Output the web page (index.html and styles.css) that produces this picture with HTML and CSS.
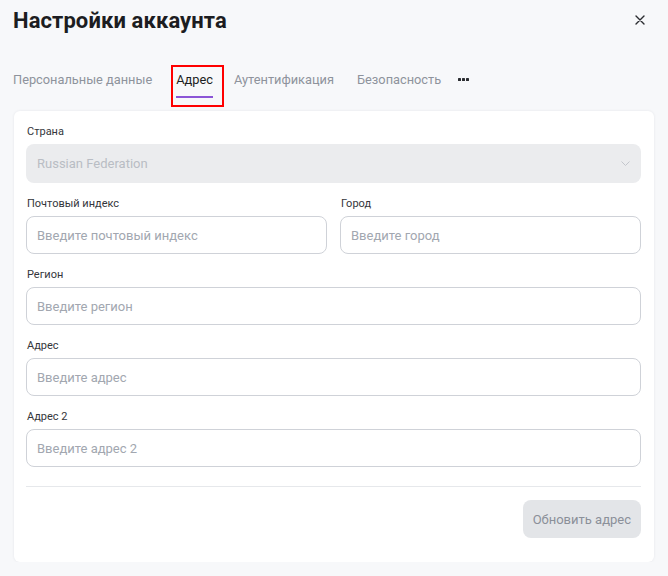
FILE: index.html
```html
<!DOCTYPE html>
<html lang="ru">
<head>
  <meta charset="UTF-8" />
  <meta name="viewport" content="width=device-width, initial-scale=1.0"/>
  <title>Настройки аккаунта</title>
  <link rel="stylesheet" href="styles.css">
</head>
<body>

<div class="modal">
  <header class="modal-header">
    <h1>Настройки аккаунта</h1>
    <button class="close" aria-label="Закрыть">
      <svg width="10" height="10" viewBox="0 0 10 10"><path d="M1 1L9 9M9 1L1 9" stroke="#2b2d31" stroke-width="1.4" stroke-linecap="round"/></svg>
    </button>
  </header>

  <nav class="tabs">
    <a class="tab">Персональные данные</a>
    <a class="tab active">Адрес</a>
    <a class="tab">Аутентификация</a>
    <a class="tab">Безопасность</a>
    <a class="tab more">
      <svg width="11" height="3" viewBox="0 0 11 3"><rect x="0" y="0" width="3" height="3" rx="0.6"/><rect x="4" y="0" width="3" height="3" rx="0.6"/><rect x="8" y="0" width="3" height="3" rx="0.6"/></svg>
    </a>
  </nav>

  <form class="card">
    <div class="field">
      <label>Страна</label>
      <div class="select">
        <span>Russian Federation</span>
        <svg width="9" height="5" viewBox="0 0 9 5"><path d="M0.5 0.5L4.5 4.5L8.5 0.5" fill="none" stroke="#c3c6cc" stroke-width="1"/></svg>
      </div>
    </div>

    <div class="row">
      <div class="field">
        <label>Почтовый индекс</label>
        <input type="text" placeholder="Введите почтовый индекс">
      </div>
      <div class="field">
        <label>Город</label>
        <input type="text" placeholder="Введите город">
      </div>
    </div>

    <div class="field">
      <label>Регион</label>
      <input type="text" placeholder="Введите регион">
    </div>

    <div class="field">
      <label>Адрес</label>
      <input type="text" placeholder="Введите адрес">
    </div>

    <div class="field">
      <label>Адрес 2</label>
      <input type="text" placeholder="Введите адрес 2">
    </div>

    <div class="form-footer">
      <button type="button" class="submit" disabled>Обновить адрес</button>
    </div>
  </form>
</div>

</body>
</html>
```

FILE: styles.css
```css
body {
  background: #f7f8fa;
  color: #1f2024;
  font-family: Roboto, 'Noto Sans', sans-serif;
  margin: 0;
}

.modal {
  padding: 0 14px 0 14px;
}

.modal-header {
  display: flex;
  justify-content: space-between;
  align-items: center;
  height: 40px;
}

.modal-header h1 {
  margin: 0;
  font-size: 22px;
  font-weight: 700;
  letter-spacing: 0.1px;
  color: #1c1d21;
  margin-left: -1px;
}

.close {
  background: none;
  border: none;
  padding: 0;
  width: 20px;
  height: 20px;
  display: flex;
  align-items: center;
  justify-content: center;
  margin-right: 4px;
  cursor: pointer;
}

.tabs {
  display: flex;
  align-items: stretch;
  height: 40px;
  margin-top: 26px;
  margin-left: -1px;
}

.tab {
  font-size: 12.8px;
  line-height: 16px;
  color: #8e939c;
  display: flex;
  align-items: flex-start;
  padding: 6px 4px 0;
  margin-right: 15px;
  position: relative;
  cursor: pointer;
}

.tab:first-child {
  padding-left: 0;
  margin-right: 16px;
}

.tab.active {
  color: #1c1d21;
  outline: 2px solid #f00;
  outline-offset: -1px;
  padding-right: 10px;
  margin-right: 7px;
}

.tab.active::after {
  content: '';
  position: absolute;
  left: 4px;
  right: 10px;
  bottom: 8px;
  height: 2px;
  background: #8b55d6;
}

.tab.more {
  padding-left: 0;
  padding-top: 12px;
  margin-left: -2px;
}

.tab.more svg {
  fill: #2b2d31;
}

.card {
  margin-top: 5px;
  background: #fff;
  border-radius: 6px;
  box-shadow: 0 0 3px rgba(20, 30, 50, 0.08);
  padding: 13px 13px 24px 12px;
  display: flex;
  flex-direction: column;
  gap: 13px;
}

.row {
  display: grid;
  grid-template-columns: 1fr 1fr;
  gap: 13px;
}

.field {
  display: flex;
  flex-direction: column;
  gap: 4px;
}

.field label {
  font-size: 11px;
  line-height: 16px;
  color: #34363b;
  padding-left: 1px;
}

.field input,
.select {
  box-sizing: border-box;
  height: 38px;
  border: 1px solid #cfd2d8;
  border-radius: 8px;
  padding: 0 10px;
  font-family: inherit;
  font-size: 13px;
  color: #1f2024;
  background: #fff;
  outline: none;
}

.field input::placeholder {
  color: #a2a7b0;
}

.select {
  height: 39px;
  border: none;
  background: #ebecee;
  display: flex;
  align-items: center;
  justify-content: space-between;
  color: #b9bdc4;
  padding: 0 11px;
}

.form-footer {
  border-top: 1px solid #e6e8eb;
  margin-top: 6px;
  padding-top: 13px;
  display: flex;
  justify-content: flex-end;
}

.submit {
  background: #e3e5e8;
  color: #8b9099;
  border: none;
  border-radius: 8px;
  height: 38px;
  padding: 0 10px;
  font-family: inherit;
  font-size: 13px;
}
```
